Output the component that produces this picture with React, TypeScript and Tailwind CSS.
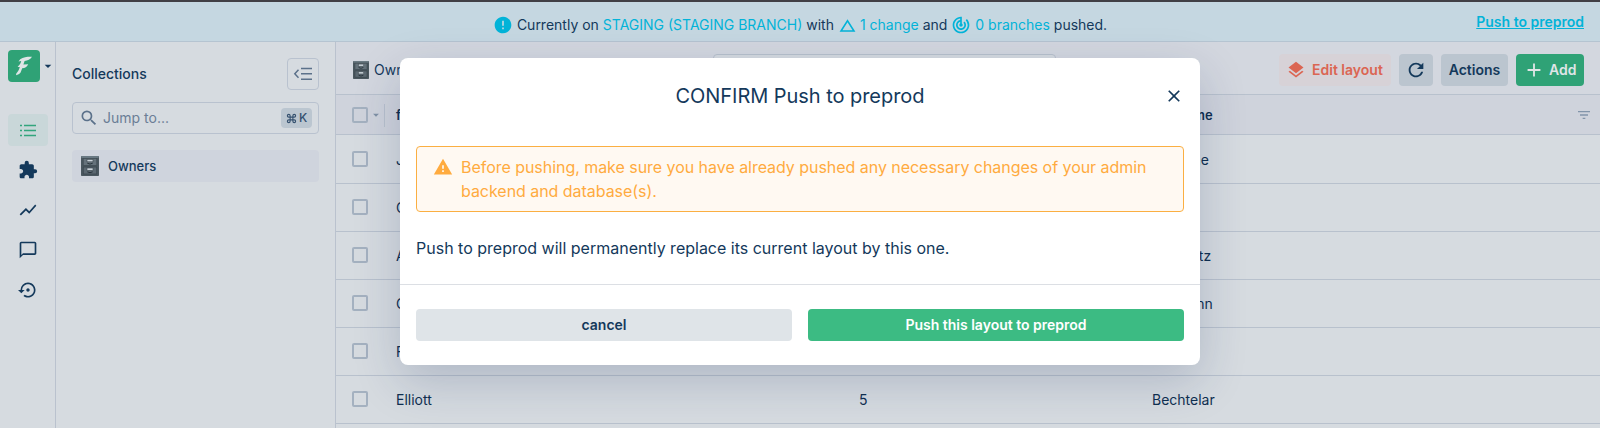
import React from "react";
import {
  MdAdd,
  MdArrowDropDown,
  MdChangeHistory,
  MdChatBubbleOutline,
  MdClose,
  MdError,
  MdExtension,
  MdFilterList,
  MdLayers,
  MdRefresh,
  MdSearch,
  MdSettingsBackupRestore,
  MdShowChart,
  MdTrackChanges,
  MdWarning,
} from "react-icons/md";

const owners = [
  { first: "Jo", count: "", last: "Osborne" },
  { first: "Cy", count: "", last: "" },
  { first: "Al", count: "", last: "Horowitz" },
  { first: "Cy", count: "", last: "Hermann" },
  { first: "Flo", count: "", last: "" },
  { first: "Elliott", count: "5", last: "Bechtelar" },
];

function Cabinet({ className }: { className: string }) {
  return (
    <svg viewBox="0 0 18 20" preserveAspectRatio="none" className={className}>
      <rect x="0" y="0" width="18" height="20" rx="0.8" fill="#4b5860" />
      <rect x="0.4" y="0.2" width="17.2" height="1.6" fill="#71818a" />
      <rect x="2.2" y="2.4" width="13.6" height="7" fill="#65727b" stroke="#3f4b53" strokeWidth="0.7" />
      <rect x="2.2" y="11" width="13.6" height="7" fill="#5b6871" stroke="#38434b" strokeWidth="0.7" />
      <rect x="6" y="3.4" width="6" height="2.4" fill="#c9d2d9" stroke="#3d484f" strokeWidth="0.6" />
      <rect x="6" y="12" width="6" height="2.4" fill="#c9d2d9" stroke="#3d484f" strokeWidth="0.6" />
      <path d="M6.3 7.2q2.7 1.8 5.4 0M6.3 15.8q2.7 1.8 5.4 0" fill="none" stroke="#27323a" strokeWidth="1" />
    </svg>
  );
}

function Banner() {
  return (
    <div className="flex h-[42px] shrink-0 items-center border-t-2 border-b border-t-[#413f45] border-b-[#b5c4d1] bg-[#c5d7e1] px-4">
      <div className="w-[120px]" />
      <div className="flex flex-1 items-center justify-center whitespace-pre pt-[7px]">
        <MdError className="mr-1 size-5 text-[#02b3d8]" />
        <span>Currently on </span>
        <span className="text-[#02b3d8]">STAGING (STAGING BRANCH)</span>
        <span> with </span>
        <MdChangeHistory className="mr-[3px] size-[19px] text-[#02b3d8]" />
        <span className="text-[#02b3d8]">1 change</span>
        <span> and </span>
        <MdTrackChanges className="mr-1 size-5 text-[#02b3d8]" />
        <span className="text-[#02b3d8]">0 branches</span>
        <span> pushed.</span>
      </div>
      <a className="w-[120px] pt-px text-right font-semibold whitespace-nowrap text-[#02b3d8] underline">Push to preprod</a>
    </div>
  );
}

function NavRail() {
  return (
    <nav className="flex w-14 shrink-0 flex-col border-r border-[#bac2ce] bg-[#d6dbe0] px-2 pt-2">
      <div className="flex items-center">
        <div className="flex size-8 shrink-0 items-center justify-center rounded bg-[#2fa276]">
          <svg viewBox="0 0 16 20" className="h-5 w-4" fill="#dfe5e6">
            <path d="M16 .8C12 .6 7.8 1 4.2 3.2L2.5 5.5 5.2 5C4.9 7 4 8.3 3 9.2L1.6 11h2.2C3.200 13.500 2 15.500.3 17.600L0 19.200C2 19 3.500 18 4.600 16.600L6.200 12.300C9 12.200 11 10.600 12.200 8.200L7.400 8.600 8.600 5C11.500 4.800 14.500 3.500 16 .8Z" />
          </svg>
        </div>
        <MdArrowDropDown className="size-4 shrink-0" />
      </div>
      <div className="mt-8 flex h-8 w-10 items-center justify-center rounded bg-[#c9d7d9]">
        <svg viewBox="0 0 16 13" className="h-[13px] w-4" fill="none" stroke="#32a57d" strokeWidth="1.7">
          <path d="M0 1.500h2M0 6.500h2M0 11.500h2M4 1.500h12M4 6.500h12M4 11.500h12" />
        </svg>
      </div>
      <div className="mt-1 flex h-10 w-10 items-center justify-center"><MdExtension className="size-5" /></div>
      <div className="flex h-10 w-10 items-center justify-center"><MdShowChart className="size-5" /></div>
      <div className="flex h-10 w-10 items-center justify-center"><MdChatBubbleOutline className="size-5" /></div>
      <div className="flex h-10 w-10 items-center justify-center"><MdSettingsBackupRestore className="size-5" /></div>
    </nav>
  );
}

function Sidebar() {
  return (
    <aside className="flex w-[280px] shrink-0 flex-col border-r border-[#bac2ce] bg-[#d6dbe0] px-4 pt-4">
      <div className="flex h-8 items-center justify-between">
        <h2 className="font-medium">Collections</h2>
        <button className="flex size-8 items-center justify-center rounded border border-[#b9c2cf]">
          <svg viewBox="0 0 20 14" className="h-3.5 w-5" fill="none" stroke="#5b718a" strokeWidth="1.5">
            <path d="M5.500 2.800 1.800 6.800l3.700 4M8 1.500h11M8 6.800h11M8 12.200h11" />
          </svg>
        </button>
      </div>
      <div className="mt-3 flex h-8 items-center rounded border border-[#b9c2cf] pr-1.5 pl-1.5">
        <MdSearch className="size-5 text-[#5b718a]" />
        <span className="flex-1 pl-1 text-[#6b7e96]">Jump to...</span>
        <span className="flex h-5 w-[31px] items-center justify-center gap-0.5 rounded bg-[#bbc6d0] text-xs font-medium text-[#35516f]">
          <svg viewBox="0 0 24 24" className="size-[11px]" fill="none" stroke="currentColor" strokeWidth="2.4">
            <path d="M15 6v12a3 3 0 1 0 3-3H6a3 3 0 1 0 3 3V6a3 3 0 1 0-3 3h12a3 3 0 1 0-3-3" />
          </svg>
          <span>K</span>
        </span>
      </div>
      <div className="mt-4 flex h-8 items-center gap-[9px] rounded bg-[#cfd4dd] px-[9px]">
        <Cabinet className="h-5 w-[18px]" />
        <span className="pt-px text-[13px] font-medium">Owners</span>
      </div>
    </aside>
  );
}

function Toolbar() {
  return (
    <div className="flex h-[53px] shrink-0 items-center border-b border-[#b8c1cd] bg-[#d3d7df] px-4 pt-1">
      <div className="flex w-[361px] items-center gap-[5px] pl-px">
        <Cabinet className="mb-px h-[18px] w-4" />
        <span>Owners</span>
      </div>
      <div className="h-8 w-[343px] rounded border border-[#b8c1cd] bg-[#d6dbe0]" />
      <div className="flex flex-1 items-center justify-end gap-2 font-semibold whitespace-nowrap">
        <button className="flex h-8 w-28 items-center gap-1.5 rounded bg-[#d7d2d7] pl-[7px] text-[#db6552]">
          <MdLayers className="size-5" />
          Edit layout
        </button>
        <button className="flex h-8 w-[34px] items-center justify-center rounded bg-[#bbc5cf]">
          <MdRefresh className="size-[22px]" />
        </button>
        <button className="h-8 w-[67px] rounded bg-[#bbc5cf]">Actions</button>
        <button className="flex h-8 w-[68px] items-center gap-1 rounded bg-[#2fa276] pl-[7px] text-[#dfe5e6]">
          <MdAdd className="size-[22px]" />
          Add
        </button>
      </div>
    </div>
  );
}

function Checkbox() {
  return <span className="size-4 shrink-0 rounded-[2px] border-2 border-[#a4b1c0]" />;
}

function OwnersTable() {
  return (
    <section className="flex flex-1 flex-col overflow-hidden text-[#0f2f50]">
      <div className="flex h-10 shrink-0 items-center border-b border-[#b8c1cd] bg-[#cfd3dc] pt-px pr-2 pl-4 text-[13px] font-semibold">
        <div className="flex w-11 shrink-0 items-center">
          <Checkbox />
          <MdArrowDropDown className="ml-px size-3.5 text-[#7f90a5]" />
          <span className="ml-px h-[23px] w-px bg-[#b8c1cd]" />
        </div>
        <span className="w-[756px]">first name</span>
        <span className="flex-1">last name</span>
        <MdFilterList className="size-4 text-[#8295aa]" />
      </div>
      <div className="flex flex-col bg-[#d6dbe0] pt-px">
        {owners.map((owner, index) => (
          <div key={index} className="flex h-12 shrink-0 items-center border-b border-[#b8c1cd] pl-4">
            <div className="mb-px flex w-11 shrink-0"><Checkbox /></div>
            <span className="w-[463px] pt-px">{owner.first}</span>
            <span className="w-[293px] pt-px">{owner.count}</span>
            <span className="pt-px">{owner.last}</span>
          </div>
        ))}
      </div>
    </section>
  );
}

function ConfirmDialog() {
  return (
    <div className="absolute inset-0 flex items-start justify-center pt-[58px]">
      <div role="dialog" className="flex h-[307px] w-[800px] flex-col rounded-lg bg-white shadow-[0_16px_48px_rgba(20,40,90,0.2)]">
        <header className="flex h-[76px] items-center px-4">
          <div className="w-5" />
          <h1 className="flex-1 text-center text-xl tracking-[-0.05px]">CONFIRM Push to preprod</h1>
          <MdClose className="size-5" />
        </header>
        <div className="mx-4 mt-3 flex h-[66px] items-start gap-2 rounded border border-[#fbaf42] bg-[#fff9f2] px-4 pt-2 text-base leading-6 text-[#ffab3f]">
          <MdWarning className="mt-0.5 size-5 shrink-0" />
          <p className="tracking-[-0.04px]">Before pushing, make sure you have already pushed any necessary changes of your admin backend and database(s).</p>
        </div>
        <p className="mx-4 mt-6 text-base leading-6">Push to preprod will permanently replace its current layout by this one.</p>
        <footer className="mt-6 flex gap-4 border-t border-[#dcdfe4] px-4 pt-6 font-semibold">
          <button className="h-8 flex-1 rounded bg-[#dfe4e8]">cancel</button>
          <button className="h-8 flex-1 rounded bg-[#3cbb83] text-white">Push this layout to preprod</button>
        </footer>
      </div>
    </div>
  );
}

export default function App() {
  return (
    <div className="relative flex h-[428px] w-[1600px] flex-col overflow-hidden bg-[#d6dbe0] font-['Inter',sans-serif] text-sm text-[#14395b]">
      <Banner />
      <div className="flex min-h-0 flex-1">
        <NavRail />
        <Sidebar />
        <main className="flex min-w-0 flex-1 flex-col">
          <Toolbar />
          <OwnersTable />
        </main>
      </div>
      <ConfirmDialog />
    </div>
  );
}
